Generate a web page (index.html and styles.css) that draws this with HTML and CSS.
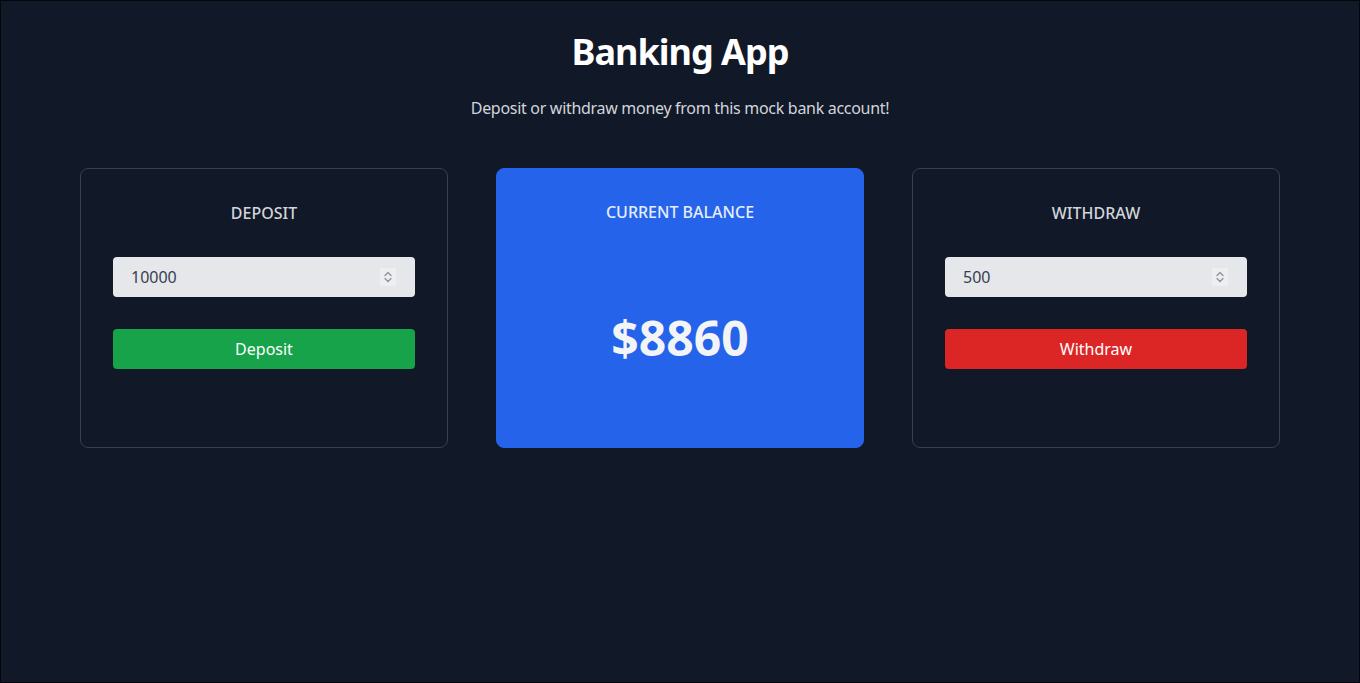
FILE: index.html
```html
<!DOCTYPE html>
<html lang="en">
<head>
<meta charset="utf-8">
<title>Banking App</title>
<link rel="stylesheet" href="styles.css">
</head>
<body>
<div class="page">
  <header class="header">
    <h1 class="title">Banking App</h1>
    <p class="subtitle">Deposit or withdraw money from this mock bank account!</p>
  </header>
  <main class="cards">
    <section class="card card-outline">
      <h2 class="card-label">DEPOSIT</h2>
      <div class="field">
        <input class="amount-input" type="number" value="10000">
        <svg class="spinner" width="16" height="18" viewBox="0 0 16 18"><rect width="16" height="18" rx="1" fill="#eceef1"/><path d="M5 7.5 L8 4.5 L11 7.5 M5 10.5 L8 13.5 L11 10.5" fill="none" stroke="#8b8f98" stroke-width="1.2" stroke-linecap="round" stroke-linejoin="round"/></svg>
      </div>
      <button class="btn btn-green">Deposit</button>
    </section>
    <section class="card card-blue">
      <h2 class="card-label balance-label">CURRENT BALANCE</h2>
      <div class="balance">$8860</div>
    </section>
    <section class="card card-outline">
      <h2 class="card-label">WITHDRAW</h2>
      <div class="field">
        <input class="amount-input" type="number" value="500">
        <svg class="spinner" width="16" height="18" viewBox="0 0 16 18"><rect width="16" height="18" rx="1" fill="#eceef1"/><path d="M5 7.5 L8 4.5 L11 7.5 M5 10.5 L8 13.5 L11 10.5" fill="none" stroke="#8b8f98" stroke-width="1.2" stroke-linecap="round" stroke-linejoin="round"/></svg>
      </div>
      <button class="btn btn-red">Withdraw</button>
    </section>
  </main>
</div>
</body>
</html>
```
FILE: styles.css
```css
* { box-sizing: border-box; }
html, body { margin: 0; padding: 0; height: 100%; }
body {
  background: #111827;
  font-family: "Noto Sans", "Open Sans", sans-serif;
  color: #d1d5db;
}
.page {
  min-height: 100%;
  border: 1px solid #04060a;
  padding: 31px 79px 0;
}
.header { text-align: center; }
.title {
  margin: 0 0 24px;
  font-size: 36px;
  line-height: 40px;
  font-weight: 700;
  letter-spacing: -1px;
  color: #ffffff;
}
.subtitle {
  margin: 0 0 48px;
  font-size: 16px;
  line-height: 24px;
  letter-spacing: -0.3px;
  color: #d1d5db;
}
.cards {
  display: grid;
  grid-template-columns: repeat(3, 1fr);
  gap: 48px;
}
.card {
  height: 280px;
  border-radius: 8px;
  padding: 32px;
  display: flex;
  flex-direction: column;
  align-items: stretch;
}
.card-outline { border: 1px solid #374151; }
.card-blue { background: #2563eb; border: 1px solid #2563eb; }
.card-label {
  margin: 0 0 32px;
  font-size: 16px;
  line-height: 24px;
  font-weight: 500;
  text-align: center;
  color: #d1d5db;
}
.balance-label { color: #e5edfb; margin-bottom: 0; margin-top: -1px; }
.field { position: relative; margin-bottom: 32px; }
.amount-input {
  display: block;
  width: 100%;
  height: 40px;
  border: none;
  border-radius: 4px;
  background: #e5e7eb;
  padding: 0 18px;
  font-family: inherit;
  font-size: 16px;
  color: #374151;
  -moz-appearance: textfield;
  outline: none;
}
.amount-input::-webkit-outer-spin-button,
.amount-input::-webkit-inner-spin-button { -webkit-appearance: none; margin: 0; }
.spinner { position: absolute; right: 19px; top: 11px; }
.btn {
  height: 40px;
  border: none;
  border-radius: 4px;
  font-family: inherit;
  font-size: 16px;
  color: #ffffff;
  cursor: pointer;
}
.btn-green { background: #16a34a; }
.btn-red { background: #dc2626; }
.balance {
  margin-top: 90px;
  text-align: center;
  font-size: 48px;
  line-height: 48px;
  font-weight: 700;
  color: #f3f4f6;
}
```
